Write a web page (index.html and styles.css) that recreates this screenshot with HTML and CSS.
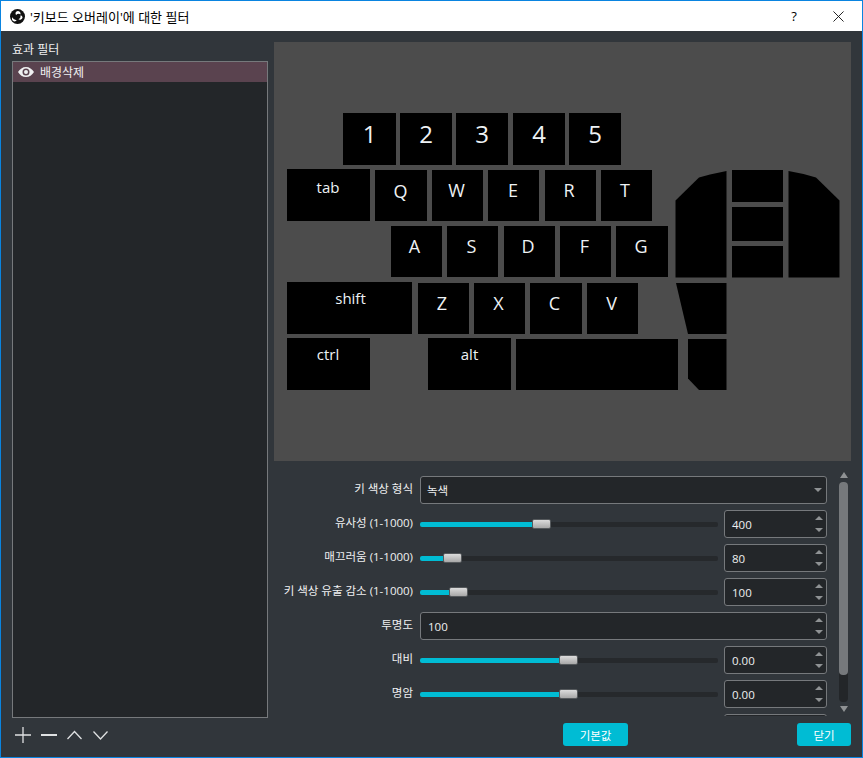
FILE: index.html
```html
<!DOCTYPE html>
<html lang="ko">
<head>
    <meta charset="UTF-8">
    <meta name="viewport" content="width=device-width, initial-scale=1.0">
    <title>'키보드 오버레이'에 대한 필터</title>
    <link rel="stylesheet" href="styles.css">
</head>
<body>
    <div class="window">
        <header class="titlebar">
            <svg class="logo" viewBox="0 0 16 16">
                <circle cx="8" cy="8" r="8" fill="#111"/>
                <path fill="#fff" d="M8.3 2.2a3 3 0 0 1 2.9 3.6 4 4 0 0 0-4.700.5 2.700 2.700 0 0 1-.6-2.300 3 3 0 0 1 2.400-1.800z"/>
                <path fill="#fff" d="M13.400 9.200a3 3 0 0 1-4.400 1.700 4 4 0 0 0 2.300-4.200 2.700 2.700 0 0 1 2.100 2.500z"/>
                <path fill="#fff" d="M4 13.100a3 3 0 0 1-1.300-4.300 4 4 0 0 0 4.500 2.900 2.700 2.700 0 0 1-3.200 1.400z"/>
            </svg>
            <span class="window-title">'키보드 오버레이'에 대한 필터</span>
            <span class="help">?</span>
            <svg class="close" viewBox="0 0 12 12"><path d="M.5.5l11 11M11.500.5l-11 11"/></svg>
        </header>

        <main class="content">
            <section class="filters">
                <div class="filters-label">효과 필터</div>
                <ul class="filter-list">
                    <li class="filter-item">
                        <svg class="eye" viewBox="0 0 16 10">
                            <path fill-rule="evenodd" d="M8 0c3.300 0 6.200 2 8 5-1.800 3-4.700 5-8 5S1.800 8 0 5c1.800-3 4.700-5 8-5zm0 1.500a3.500 3.500 0 1 0 0 7 3.500 3.500 0 0 0 0-7zm0 1.500a2 2 0 1 1 0 4 2 2 0 0 1 0-4z"/>
                        </svg>
                        배경삭제
                    </li>
                </ul>
                <div class="filter-tools">
                    <svg viewBox="0 0 16 16"><path d="M0 8h16M8 0v16"/></svg>
                    <svg viewBox="0 0 16 16"><path class="thick" d="M0 8h16"/></svg>
                    <svg viewBox="0 0 16 16"><path d="M.5 12l7-7.500 7 7.500"/></svg>
                    <svg viewBox="0 0 16 16"><path d="M.5 4.500l7 7.500 7-7.500"/></svg>
                </div>
            </section>

            <section class="details">
                <div class="preview">
                    <svg class="keyboard" viewBox="274 42 577 419">
                        <rect x="343" y="113" width="53" height="52"/>
                        <rect x="400" y="113" width="52" height="52"/>
                        <rect x="456" y="113" width="52" height="52"/>
                        <rect x="513" y="113" width="52" height="52"/>
                        <rect x="569" y="113" width="52" height="52"/>
                        <rect x="287" y="169" width="83" height="52"/>
                        <rect x="375" y="170" width="52" height="51"/>
                        <rect x="432" y="170" width="51" height="51"/>
                        <rect x="488" y="170" width="51" height="51"/>
                        <rect x="545" y="170" width="51" height="51"/>
                        <rect x="601" y="170" width="51" height="51"/>
                        <rect x="391" y="226" width="51" height="51"/>
                        <rect x="447" y="226" width="51" height="51"/>
                        <rect x="504" y="226" width="51" height="51"/>
                        <rect x="560" y="226" width="51" height="51"/>
                        <rect x="616" y="226" width="52" height="51"/>
                        <rect x="287" y="282" width="125" height="52"/>
                        <rect x="418" y="283" width="51" height="51"/>
                        <rect x="474" y="283" width="51" height="51"/>
                        <rect x="530" y="283" width="52" height="51"/>
                        <rect x="587" y="283" width="51" height="51"/>
                        <rect x="287" y="338" width="83" height="52"/>
                        <rect x="428" y="338" width="83" height="52"/>
                        <rect x="516" y="339" width="162" height="51"/>
                        <polygon points="675.500,200.500 699,177.500 710,174.500 726.500,171 726.500,277.500 675.500,277.500"/>
                        <rect x="732" y="170" width="51" height="32"/>
                        <rect x="732" y="207" width="51" height="34"/>
                        <rect x="732" y="246" width="51" height="31.500"/>
                        <polygon points="788.500,171 803.500,174 816,177.500 839.500,200.500 839.500,277.500 788.500,277.500"/>
                        <polygon points="676,283 726.500,283 726.500,334 688,334 681.500,306.500"/>
                        <polygon points="688,339 726.500,339 726.500,390 699,390 688,378.500"/>

                        <text class="key-num" x="369.500" y="143">1</text>
                        <text class="key-num" x="426" y="143">2</text>
                        <text class="key-num" x="482" y="143">3</text>
                        <text class="key-num" x="539" y="143">4</text>
                        <text class="key-num" x="595" y="143">5</text>
                        <text class="key-word" x="328" y="193">tab</text>
                        <text class="key-char" x="400.500" y="198">Q</text>
                        <text class="key-char" x="456.500" y="197">W</text>
                        <text class="key-char" x="513" y="197">E</text>
                        <text class="key-char" x="569" y="197">R</text>
                        <text class="key-char" x="625" y="197">T</text>
                        <text class="key-char" x="414.500" y="253">A</text>
                        <text class="key-char" x="471.500" y="253">S</text>
                        <text class="key-char" x="528" y="253">D</text>
                        <text class="key-char" x="584.500" y="253">F</text>
                        <text class="key-char" x="641" y="253">G</text>
                        <text class="key-word" x="350.500" y="304">shift</text>
                        <text class="key-char" x="442" y="310">Z</text>
                        <text class="key-char" x="498.500" y="310">X</text>
                        <text class="key-char" x="554.500" y="310">C</text>
                        <text class="key-char" x="611.500" y="310">V</text>
                        <text class="key-word" x="328" y="360">ctrl</text>
                        <text class="key-word" x="469.500" y="360">alt</text>
                    </svg>
                </div>

                <div class="props">
                    <div class="prop-rows">
                        <div class="prop-row">
                            <label class="prop-label">키 색상 형식</label>
                            <div class="field select">
                                <span class="field-value">녹색</span>
                                <i class="arrow-down"></i>
                            </div>
                        </div>
                        <div class="prop-row">
                            <label class="prop-label">유사성 (1-1000)</label>
                            <div class="slider-group">
                                <div class="slider">
                                    <div class="slider-fill" style="width: 112px"></div>
                                    <div class="slider-handle"></div>
                                    <div class="slider-rest"></div>
                                </div>
                                <div class="field spin">
                                    <span class="field-value">400</span>
                                    <span class="spin-arrows"><i class="arrow-up"></i><i class="arrow-down"></i></span>
                                </div>
                            </div>
                        </div>
                        <div class="prop-row">
                            <label class="prop-label">매끄러움 (1-1000)</label>
                            <div class="slider-group">
                                <div class="slider">
                                    <div class="slider-fill" style="width: 23px"></div>
                                    <div class="slider-handle"></div>
                                    <div class="slider-rest"></div>
                                </div>
                                <div class="field spin">
                                    <span class="field-value">80</span>
                                    <span class="spin-arrows"><i class="arrow-up"></i><i class="arrow-down"></i></span>
                                </div>
                            </div>
                        </div>
                        <div class="prop-row">
                            <label class="prop-label">키 색상 유출 감소 (1-1000)</label>
                            <div class="slider-group">
                                <div class="slider">
                                    <div class="slider-fill" style="width: 29px"></div>
                                    <div class="slider-handle"></div>
                                    <div class="slider-rest"></div>
                                </div>
                                <div class="field spin">
                                    <span class="field-value">100</span>
                                    <span class="spin-arrows"><i class="arrow-up"></i><i class="arrow-down"></i></span>
                                </div>
                            </div>
                        </div>
                        <div class="prop-row">
                            <label class="prop-label">투명도</label>
                            <div class="field spin">
                                <span class="field-value">100</span>
                                <span class="spin-arrows"><i class="arrow-up"></i><i class="arrow-down"></i></span>
                            </div>
                        </div>
                        <div class="prop-row">
                            <label class="prop-label">대비</label>
                            <div class="slider-group">
                                <div class="slider">
                                    <div class="slider-fill" style="width: 139px"></div>
                                    <div class="slider-handle"></div>
                                    <div class="slider-rest"></div>
                                </div>
                                <div class="field spin">
                                    <span class="field-value">0.00</span>
                                    <span class="spin-arrows"><i class="arrow-up"></i><i class="arrow-down"></i></span>
                                </div>
                            </div>
                        </div>
                        <div class="prop-row">
                            <label class="prop-label">명암</label>
                            <div class="slider-group">
                                <div class="slider">
                                    <div class="slider-fill" style="width: 139px"></div>
                                    <div class="slider-handle"></div>
                                    <div class="slider-rest"></div>
                                </div>
                                <div class="field spin">
                                    <span class="field-value">0.00</span>
                                    <span class="spin-arrows"><i class="arrow-up"></i><i class="arrow-down"></i></span>
                                </div>
                            </div>
                        </div>
                        <div class="prop-row">
                            <label class="prop-label"></label>
                            <div class="slider-group">
                                <div class="slider"></div>
                                <div class="field spin"></div>
                            </div>
                        </div>
                    </div>
                    <div class="scrollbar">
                        <i class="scroll-up"></i>
                        <div class="scroll-track"><div class="scroll-thumb"></div></div>
                        <i class="scroll-down"></i>
                    </div>
                </div>

                <div class="actions">
                    <button class="btn btn-defaults">기본값</button>
                    <button class="btn btn-close">닫기</button>
                </div>
            </section>
        </main>
    </div>
</body>
</html>
```

FILE: styles.css
```css
* {
    box-sizing: border-box;
}
body {
    margin: 0;
    font-family: "Open Sans", "Noto Sans CJK KR", sans-serif;
    font-size: 12px;
    color: #eff0f1;
    background-color: #31363b;
}
.window {
    width: 863px;
    height: 758px;
    border: 1px solid #0a84e0;
    display: flex;
    flex-direction: column;
    overflow: hidden;
}

/* title bar */
.titlebar {
    height: 30px;
    flex: none;
    background-color: white;
    color: #000;
    display: flex;
    align-items: center;
    padding-left: 9px;
}
.logo {
    width: 15px;
    height: 15px;
    margin-top: 1px;
}
.window-title {
    margin-left: 5px;
    font-size: 13px;
    flex: 1;
}
.help {
    font-size: 13px;
    width: 20px;
    margin-right: 29px;
    text-align: center;
}
.close {
    width: 11px;
    height: 11px;
    margin-right: 18px;
    fill: none;
    stroke: #111;
    stroke-width: 1;
}

/* main layout */
.content {
    flex: 1;
    min-height: 0;
    display: flex;
    gap: 6px;
    padding: 11px;
    background-color: #31363b;
}
.filters {
    width: 256px;
    flex: none;
    display: flex;
    flex-direction: column;
}
.filters-label {
    height: 19px;
    line-height: 15px;
    font-size: 12px;
}
.filter-list {
    flex: 1;
    margin: 0;
    padding: 0;
    list-style: none;
    background-color: #232629;
    border: 1px solid #76797c;
}
.filter-item {
    height: 20px;
    display: flex;
    align-items: center;
    gap: 6px;
    padding-left: 5px;
    background-color: #5a434f;
    font-size: 12px;
}
.eye {
    width: 16px;
    height: 10px;
    fill: #eff0f1;
}
.filter-tools {
    height: 28px;
    flex: none;
    display: flex;
    align-items: center;
    gap: 10px;
    padding: 5px 0 0 3px;
}
.filter-tools svg {
    width: 16px;
    height: 16px;
    fill: none;
    stroke: #dfe1e2;
    stroke-width: 1.300;
}
.filter-tools .thick {
    stroke-width: 2;
}
.details {
    flex: 1;
    min-width: 0;
    display: flex;
    flex-direction: column;
}

/* preview with the keyboard overlay */
.preview {
    height: 419px;
    flex: none;
    background-color: #4c4c4c;
}
.keyboard {
    display: block;
    width: 577px;
    height: 419px;
    fill: #000;
}
.keyboard text {
    fill: #eef2f5;
    text-anchor: middle;
}
.key-num {
    font-size: 24px;
    font-weight: 500;
}
.key-char {
    font-size: 18px;
}
.key-word {
    font-size: 15px;
}

/* property rows */
.props {
    height: 255px;
    flex: none;
    display: flex;
    gap: 12px;
    overflow: hidden;
}
.prop-rows {
    width: 553px;
    padding-top: 15px;
    display: flex;
    flex-direction: column;
    gap: 6px;
}
.prop-row {
    height: 28px;
    flex: none;
    display: flex;
    align-items: center;
    gap: 7px;
}
.prop-label {
    width: 139px;
    flex: none;
    text-align: right;
    padding-bottom: 4px;
    font-size: 11.500px;
    white-space: nowrap;
}
.field {
    height: 28px;
    display: flex;
    align-items: center;
    justify-content: space-between;
    background-color: #232629;
    border: 1px solid #76797c;
    border-radius: 3px;
    padding: 0 3px 0 7px;
}
.select, .prop-row > .spin {
    flex: 1;
}
.select {
    padding-left: 6px;
    padding-right: 4px;
}
.field-value {
    font-size: 11.500px;
}
.slider-group {
    flex: 1;
    display: flex;
    align-items: center;
    gap: 6px;
}
.slider-group .spin {
    width: 103px;
    flex: none;
}
.slider {
    flex: 1;
    display: flex;
    align-items: center;
}
.slider-fill {
    height: 5px;
    background-color: #00bcd4;
    border-radius: 2px 0 0 2px;
}
.slider-handle {
    width: 19px;
    height: 10px;
    flex: none;
    border-radius: 2px;
    border: 1px solid #55595c;
    background: linear-gradient(#dcdcdc, #a8a8a8);
}
.slider-rest {
    flex: 1;
    height: 5px;
    background-color: #26292c;
    border-radius: 0 2px 2px 0;
}
.spin-arrows {
    height: 100%;
    display: flex;
    flex-direction: column;
    justify-content: space-between;
    padding: 5px 0;
}
.arrow-up, .arrow-down {
    display: block;
    width: 0;
    height: 0;
    border-left: 4px solid transparent;
    border-right: 4px solid transparent;
}
.arrow-up {
    border-bottom: 4px solid #8f9294;
}
.arrow-down {
    border-top: 4px solid #8f9294;
}

/* scrollbar */
.scrollbar {
    width: 9px;
    flex: none;
    display: flex;
    flex-direction: column;
    align-items: center;
    padding-top: 11px;
    gap: 4px;
}
.scroll-up, .scroll-down {
    display: block;
    width: 0;
    height: 0;
    flex: none;
    border-left: 4px solid transparent;
    border-right: 4px solid transparent;
}
.scroll-up {
    border-bottom: 6px solid #8f9294;
}
.scroll-down {
    border-top: 6px solid #8f9294;
}
.scroll-track {
    width: 9px;
    height: 220px;
    border-radius: 4px;
    background-color: #232629;
}
.scroll-thumb {
    height: 193px;
    border-radius: 4px;
    background-color: #76797c;
}

/* buttons */
.actions {
    flex: 1;
    display: flex;
    align-items: flex-end;
    justify-content: space-between;
    padding-left: 289px;
}
.btn {
    height: 23px;
    padding: 0;
    border: none;
    border-radius: 3px;
    background-color: #00bcd4;
    color: white;
    font-family: inherit;
    font-size: 11.500px;
}
.btn-defaults {
    width: 65px;
}
.btn-close {
    width: 54px;
}
```
